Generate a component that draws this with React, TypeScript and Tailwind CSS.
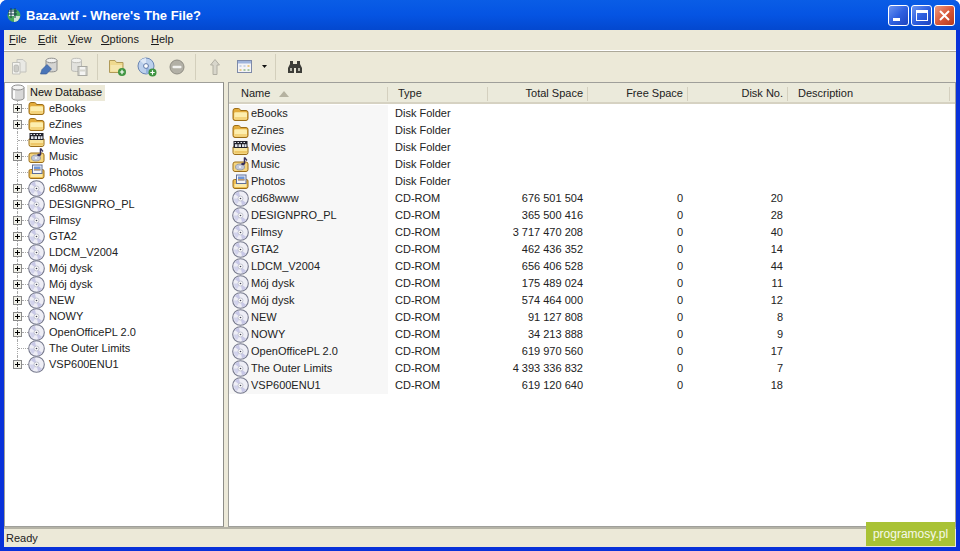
import React from "react";

const F = { fontFamily: '"Liberation Sans", Arial, sans-serif' };

function Folder() {
  return (
    <svg width="17" height="16" viewBox="0 0 17 16" className="shrink-0">
      <path d="M1 5 Q1 2.500 3 2.500 H6.500 Q7.500 2.500 8 3.500 L8.500 4.500 H14 Q16 4.500 16 6.500 V12.500 Q16 14.500 14 14.500 H3 Q1 14.500 1 12.500 Z" fill="#e3ac3c" stroke="#9c6e18" />
      <path d="M2.200 7.500 Q2.200 6.200 3.500 6.200 H14 Q15 6.200 15 7.500 V12.300 Q15 13.500 13.800 13.500 H3.400 Q2.200 13.500 2.200 12.300 Z" fill="#fdeeae" />
      <path d="M2.500 11 H14.800 V12.300 Q14.800 13.400 13.800 13.400 H3.400 Q2.500 13.400 2.500 12.300 Z" fill="#f4d47c" />
    </svg>
  );
}

function MovieFolder() {
  return (
    <svg width="17" height="16" viewBox="0 0 17 16" className="shrink-0">
      <path d="M1 7 H16 V12.500 Q16 14.500 14 14.500 H3 Q1 14.500 1 12.500 Z" fill="#f9e59c" stroke="#9c6e18" />
      <rect x="1.500" y="1" width="14" height="7" fill="#23232c" />
      <path d="M2.500 2h1.500v1H2.500zM5.500 2H7v1H5.500zM8.500 2H10v1H8.500zM11.500 2H13v1h-1.500zM3 4.300h2.500V7H3zM6.500 4.300H9V7H6.500zM10 4.300h2.500V7H10zM13 4.300h1.500V7H13z" fill="#dfe3ea" />
      <path d="M2.500 11 H15 V12.500 Q15 13.500 14 13.500 H3 Q2.500 13.500 2.500 12.500 Z" fill="#eec768" />
    </svg>
  );
}

function MusicFolder() {
  return (
    <svg width="17" height="16" viewBox="0 0 17 16" className="shrink-0">
      <path d="M1 7 Q1 5 3 5 H14 Q16 5 16 7 V12.500 Q16 14.500 14 14.500 H3 Q1 14.500 1 12.500 Z" fill="#f5d57e" stroke="#9c6e18" />
      <ellipse cx="8" cy="10" rx="4.500" ry="3" fill="#c3c9d8" stroke="#8088a0" strokeWidth="0.7" />
      <circle cx="8" cy="10" r="0.9" fill="#fff" />
      <path d="M12.500 0.500 V7" stroke="#36305c" strokeWidth="1.500" />
      <path d="M12.500 0.500 L15 3.500" stroke="#36305c" strokeWidth="1.200" />
      <ellipse cx="11" cy="7" rx="1.800" ry="1.200" fill="#36305c" />
    </svg>
  );
}

function PhotoFolder() {
  return (
    <svg width="17" height="16" viewBox="0 0 17 16" className="shrink-0">
      <path d="M1 7 Q1 5.500 2.500 5.500 H14.500 Q16 5.500 16 7 V12.500 Q16 14.500 14 14.500 H3 Q1 14.500 1 12.500 Z" fill="#eebf52" stroke="#9c6e18" />
      <rect x="4.500" y="1" width="9.500" height="8.500" fill="#f3f5fb" stroke="#5e6e98" />
      <rect x="6" y="2.500" width="6.500" height="4" fill="#6f95d6" />
      <rect x="6" y="5" width="6.500" height="1.500" fill="#c09a6a" />
      <rect x="2.500" y="10" width="12" height="3" fill="#fbeaa8" />
    </svg>
  );
}

function CD() {
  return (
    <svg width="17" height="17" viewBox="0 0 17 17" className="shrink-0">
      <circle cx="8.500" cy="8.500" r="7.800" fill="#eeeef6" stroke="#777a8e" strokeWidth="1.100" />
      <path d="M8.500 8.500 L2.800 4 A7 7 0 0 1 7 1.700 Z" fill="#c8c8e6" />
      <path d="M8.500 8.500 L14.200 13 A7 7 0 0 1 10 15.300 Z" fill="#c8c8e6" />
      <path d="M8.500 8.500 L2 8.500 A6.500 6.500 0 0 0 5 14 Z" fill="#d2d3ec" />
      <circle cx="8.500" cy="8.500" r="2.500" fill="#fafafa" stroke="#b5b7c6" strokeWidth="0.800" />
      <circle cx="8.500" cy="8.500" r="0.800" fill="#45475a" />
    </svg>
  );
}

function DbIcon() {
  return (
    <svg width="16" height="18" viewBox="0 0 16 18" className="shrink-0">
      <path d="M2 3.500 V14 C2 17 14 17 14 14 V3.500 Z" fill="#d8d8d8" stroke="#8c8c8c" />
      <ellipse cx="8" cy="3.500" rx="6" ry="2.500" fill="#f4f4f4" stroke="#8c8c8c" />
      <path d="M4 6.500 V14.500" stroke="#fbfbfb" strokeWidth="2" />
    </svg>
  );
}

const ICONS: Record<string, () => React.ReactElement> = {
  f: () => <Folder />,
  v: () => <MovieFolder />,
  m: () => <MusicFolder />,
  p: () => <PhotoFolder />,
  c: () => <CD />,
};

const TREE: [string, string, boolean][] = [
  ["eBooks", "f", true],
  ["eZines", "f", true],
  ["Movies", "v", false],
  ["Music", "m", true],
  ["Photos", "p", false],
  ["cd68www", "c", true],
  ["DESIGNPRO_PL", "c", true],
  ["Filmsy", "c", true],
  ["GTA2", "c", true],
  ["LDCM_V2004", "c", true],
  ["Mój dysk", "c", true],
  ["Mój dysk", "c", true],
  ["NEW", "c", true],
  ["NOWY", "c", true],
  ["OpenOfficePL 2.0", "c", true],
  ["The Outer Limits", "c", false],
  ["VSP600ENU1", "c", true],
];

const ROWS: [string, string, string, string, string, string][] = [
  ["eBooks", "f", "Disk Folder", "", "", ""],
  ["eZines", "f", "Disk Folder", "", "", ""],
  ["Movies", "v", "Disk Folder", "", "", ""],
  ["Music", "m", "Disk Folder", "", "", ""],
  ["Photos", "p", "Disk Folder", "", "", ""],
  ["cd68www", "c", "CD-ROM", "676 501 504", "0", "20"],
  ["DESIGNPRO_PL", "c", "CD-ROM", "365 500 416", "0", "28"],
  ["Filmsy", "c", "CD-ROM", "3 717 470 208", "0", "40"],
  ["GTA2", "c", "CD-ROM", "462 436 352", "0", "14"],
  ["LDCM_V2004", "c", "CD-ROM", "656 406 528", "0", "44"],
  ["Mój dysk", "c", "CD-ROM", "175 489 024", "0", "11"],
  ["Mój dysk", "c", "CD-ROM", "574 464 000", "0", "12"],
  ["NEW", "c", "CD-ROM", "91 127 808", "0", "8"],
  ["NOWY", "c", "CD-ROM", "34 213 888", "0", "9"],
  ["OpenOfficePL 2.0", "c", "CD-ROM", "619 970 560", "0", "17"],
  ["The Outer Limits", "c", "CD-ROM", "4 393 336 832", "0", "7"],
  ["VSP600ENU1", "c", "CD-ROM", "619 120 640", "0", "18"],
];

function Plus() {
  return (
    <span className="z-10 flex h-[9px] w-[9px] shrink-0 items-center justify-center border border-[#8a8a8a] bg-[#f2f2ea]">
      <svg width="7" height="7" viewBox="0 0 7 7">
        <path d="M1 3.500H6M3.500 1V6" stroke="#000" strokeWidth="1" />
      </svg>
    </span>
  );
}

function TreeRow({ label, icon, plus, last }: { label: string; icon: string; plus: boolean; last?: boolean }) {
  const I = ICONS[icon];
  return (
    <div className="relative flex h-4 items-center pl-[8px]">
      <span className={`absolute left-[12px] top-0 border-l border-dotted border-[#a8a8a8] ${last ? "h-2" : "h-4"}`} />
      <span className="flex w-[15px] shrink-0 items-center">
        {plus ? <Plus /> : <span className="ml-[5px] w-[10px] border-t border-dotted border-[#a8a8a8]" />}
        {plus && <span className="w-[6px] border-t border-dotted border-[#a8a8a8]" />}
      </span>
      <I />
      <span className="ml-[4px] whitespace-nowrap">{label}</span>
    </div>
  );
}

function Th({ label, w, right, sort }: { label: string; w: string; right?: boolean; sort?: boolean }) {
  return (
    <div className={`flex h-[14px] shrink-0 items-center border-r border-[#d4d0bf] ${w} ${right ? "justify-end pr-[4px]" : ""}`}>
      {sort ? (
        <>
          <span className="ml-[12px]">Name</span>
          <svg width="10" height="6" viewBox="0 0 10 6" className="ml-[9px]"><path d="M5 0 L10 6 H0 Z" fill="#b5b2a0" /></svg>
        </>
      ) : right ? (
        label
      ) : (
        <span className="ml-[10px]">{label}</span>
      )}
    </div>
  );
}

function ToolSep() {
  return <span className="ml-[3px] mr-[4px] h-[26px] w-px bg-[#d3cfbc]" />;
}

function TB({ children }: { children: React.ReactNode }) {
  return <span className="flex h-[22px] w-[30px] items-center justify-center">{children}</span>;
}

function WinBtn({ cls, children }: { cls: string; children: React.ReactNode }) {
  return (
    <span className={`flex h-[21px] w-[21px] items-center justify-center rounded-[3px] border border-white ${cls}`}>
      {children}
    </span>
  );
}

export default function App() {
  return (
    <div style={F} className="flex h-[551px] w-[960px] flex-col overflow-hidden rounded-t-[7px] bg-[#0831d9] text-[11px] leading-none text-[#222]">
      {/* title bar */}
      <div className="flex h-[30px] shrink-0 items-center bg-gradient-to-b from-[#0a5de6] via-[#0554e3] to-[#0348cf] pl-[6px] pr-[5px]">
        <svg width="16" height="16" viewBox="0 0 16 16" className="shrink-0">
          <circle cx="8" cy="8.500" r="6.500" fill="#49a860" />
          <path d="M3 3h5v6H3z" fill="#e8f0f8" />
          <path d="M8 9h6a6 6 0 0 1-6 6z" fill="#cfe6d4" />
          <path d="M5 1v10M9 1v10M2 4h9M2 7h9" stroke="#1b3f4a" strokeWidth="1" />
        </svg>
        <span className="ml-[4px] text-[13px] font-bold text-white">Baza.wtf - Where's The File?</span>
        <span className="ml-auto flex gap-[2px]">
          <WinBtn cls="bg-gradient-to-br from-[#6b93f0] via-[#2f60e0] to-[#1d44c0]">
            <span className="mt-[9px] mr-[5px] h-[3px] w-[7px] bg-white" />
          </WinBtn>
          <WinBtn cls="bg-gradient-to-br from-[#6b93f0] via-[#2f60e0] to-[#1d44c0]">
            <span className="h-[11px] w-[12px] border border-t-[3px] border-white" />
          </WinBtn>
          <WinBtn cls="bg-gradient-to-br from-[#eb9a80] via-[#d9583a] to-[#b33a1c]">
            <svg width="13" height="13" viewBox="0 0 13 13"><path d="M2 2L11 11M11 2L2 11" stroke="#fff" strokeWidth="2" /></svg>
          </WinBtn>
        </span>
      </div>

      {/* client */}
      <div className="mx-[4px] flex min-h-0 flex-1 flex-col bg-[#ece9d8]">
        {/* menu */}
        <div className="flex h-[21px] shrink-0 items-center border-b border-[#fff] pl-[5px] pb-[1px] text-[#1a1a1a] shadow-[0_1px_0_#aca899]">
          <span className="w-[29px]"><u>F</u>ile</span>
          <span className="w-[30px]"><u>E</u>dit</span>
          <span className="w-[33px]"><u>V</u>iew</span>
          <span className="w-[50px]"><u>O</u>ptions</span>
          <span><u>H</u>elp</span>
        </div>
        {/* toolbar */}
        <div className="flex h-[31px] shrink-0 items-center">
          <TB>
            <svg width="18" height="18" viewBox="0 0 18 18"><path d="M7 1.500H13L16 4.500V14H7Z" fill="#e9e9e4" stroke="#c2c2bc" /><path d="M2.500 4.500H10V16H2.500Z" fill="#f4f4f0" stroke="#c2c2bc" /><rect x="4" y="7" width="4.500" height="7" rx="1.500" fill="#cdcdc8" stroke="#a8a8a4" strokeWidth="0.600" /></svg>
          </TB>
          <TB>
            <svg width="20" height="20" viewBox="0 0 20 20"><path d="M7 3.500V13C7 15.500 18 15.500 18 13V3.500Z" fill="#d4d4d2" stroke="#8e8e8c" /><ellipse cx="12.500" cy="3.500" rx="5.500" ry="2.300" fill="#f2f2f0" stroke="#8e8e8c" /><path d="M1.500 17L3 12.500L8 7.500L12.500 12L7.500 17Z" fill="#4a75b8" stroke="#2f5596" strokeWidth="0.600" /></svg>
          </TB>
          <TB>
            <svg width="20" height="20" viewBox="0 0 20 20"><path d="M2.500 3.500V13C2.500 15 12.500 15 12.500 13V3.500Z" fill="#e2e2de" stroke="#bcbcb6" /><ellipse cx="7.500" cy="3.500" rx="5" ry="2.200" fill="#f2f2ef" stroke="#bcbcb6" /><rect x="9" y="9.500" width="9" height="9" fill="#d5d5ce" stroke="#a8a8a2" /><rect x="11" y="10" width="5" height="2.500" fill="#f4f4f2" /><rect x="11" y="14.500" width="5" height="3.500" fill="#f4f4f2" /></svg>
          </TB>
          <ToolSep />
          <TB>
            <svg width="20" height="20" viewBox="0 0 20 20"><path d="M2.500 3.500H8L9.500 5.500H16V15.500H2.500Z" fill="#efd98e" stroke="#b09a58" /><path d="M3.500 8H15V14.500H3.500Z" fill="#f5e6ae" /><circle cx="15" cy="15" r="4" fill="#3f9440" /><path d="M12.800 15H17.200M15 12.800V17.200" stroke="#fff" strokeWidth="1.200" /></svg>
          </TB>
          <TB>
            <svg width="22" height="22" viewBox="0 0 22 22"><circle cx="10" cy="10" r="8" fill="#bcd0ec" stroke="#6a85b2" /><path d="M10 10L4 4.500A8 8 0 0 1 10 2Z" fill="#dde8f6" /><path d="M10 10L16 15.500A8 8 0 0 1 10 18Z" fill="#95b3de" /><circle cx="10" cy="10" r="2.400" fill="#fff" stroke="#5e79a8" /><circle cx="16.500" cy="16.500" r="4" fill="#3f9440" /><path d="M14.300 16.500H18.700M16.500 14.300V18.700" stroke="#fff" strokeWidth="1.200" /></svg>
          </TB>
          <TB>
            <svg width="16" height="16" viewBox="0 0 16 16"><circle cx="8" cy="8" r="7" fill="#b2b0a6" stroke="#8f8d84" /><rect x="3.500" y="6.800" width="9" height="2.400" rx="1" fill="#f2f2f0" /></svg>
          </TB>
          <ToolSep />
          <TB>
            <svg width="12" height="18" viewBox="0 0 12 18"><path d="M6 1.500L10.500 7H8V16.500H4V7H1.500Z" fill="#d8d6cb" stroke="#b0aea2" /></svg>
          </TB>
          <span className="flex h-[22px] w-[42px] items-center pl-[7px]">
            <svg width="15" height="13" viewBox="0 0 15 13" className="shrink-0"><rect x="0.500" y="0.500" width="14" height="12" fill="#f4f4f6" stroke="#7e8aa8" /><rect x="1" y="1" width="13" height="2.500" fill="#9fb4dc" /><path d="M2.500 5h2v2h-2zM6.500 5h2v2h-2z" fill="#cbd3e6" /><path d="M10.500 5h2v2h-2zM2.500 9h2v2h-2z" fill="#e9c98a" /><path d="M6.500 9h2v2h-2zM10.500 9h2v2h-2z" fill="#a9c8a0" /></svg>
            <svg width="5" height="3" viewBox="0 0 5 3" className="ml-[10px] shrink-0"><path d="M0 0H5L2.500 3Z" fill="#111" /></svg>
          </span>
          <ToolSep />
          <TB>
            <svg width="16" height="14" viewBox="0 0 16 14"><path d="M3 1h3v3h4V1h3v3l2 4v5h-6V8H7v5H1V8l2-4z" fill="#3d3d38" /><path d="M3 8h2v3H3zM11 8h2v3h-2z" fill="#b7b7ac" /></svg>
          </TB>
        </div>
        {/* panes */}
        <div className="flex min-h-0 flex-1">
          <div className="w-[220px] shrink-0 overflow-hidden border border-[#9f9f9a] border-r-[#8d8d88] bg-white pt-[1px]">
            <div className="relative flex h-4 items-center pl-[5px] pt-[1px]">
              <DbIcon />
              <span className="ml-[1px] flex h-4 items-center bg-[#ece9d8] px-[3px] text-[#111]">New Database</span>
            </div>
            {TREE.map((t, i) => (
              <TreeRow key={i} label={t[0]} icon={t[1]} plus={t[2]} last={i === TREE.length - 1} />
            ))}
          </div>
          <div className="w-[4px] shrink-0" />
          <div className="min-w-0 flex-1 overflow-hidden border border-[#9f9f9a] bg-white">
            <div className="flex h-[21px] items-center border-b-[2px] border-[#d6d2c2] bg-[#ebeadb] pt-[2px] text-[#222]">
              <Th label="Name" w="w-[159px]" sort />
              <Th label="Type" w="w-[100px]" />
              <Th label="Total Space" w="w-[100px]" right />
              <Th label="Free Space" w="w-[100px]" right />
              <Th label="Disk No." w="w-[100px]" right />
              <Th label="Description" w="w-[162px]" />
            </div>
            <div className="pt-[1px]">
              {ROWS.map((r, i) => {
                const I = ICONS[r[1]];
                return (
                  <div key={i} className="flex h-[17px] items-center">
                    <div className="flex h-[17px] w-[159px] shrink-0 items-center bg-[#f7f7f7] pl-[3px]">
                      <I />
                      <span className="ml-[2px] whitespace-nowrap">{r[0]}</span>
                    </div>
                    <div className="w-[100px] shrink-0 pl-[7px]">{r[2]}</div>
                    <div className="w-[100px] shrink-0 pr-[5px] text-right">{r[3]}</div>
                    <div className="w-[100px] shrink-0 pr-[5px] text-right">{r[4]}</div>
                    <div className="w-[100px] shrink-0 pr-[5px] text-right">{r[5]}</div>
                  </div>
                );
              })}
            </div>
          </div>
        </div>
        {/* status */}
        <div className="relative flex h-[20px] shrink-0 items-center border-t-[2px] border-[#b5b3a6] pl-[2px] text-[#222]">
          Ready
          <span className="absolute bottom-[1px] right-[1px] flex h-[24px] w-[89px] items-center justify-center bg-[#a9c235] text-[12px] text-white/90">
            programosy.pl
          </span>
        </div>
      </div>
      <div className="h-[4px] shrink-0" />
    </div>
  );
}
